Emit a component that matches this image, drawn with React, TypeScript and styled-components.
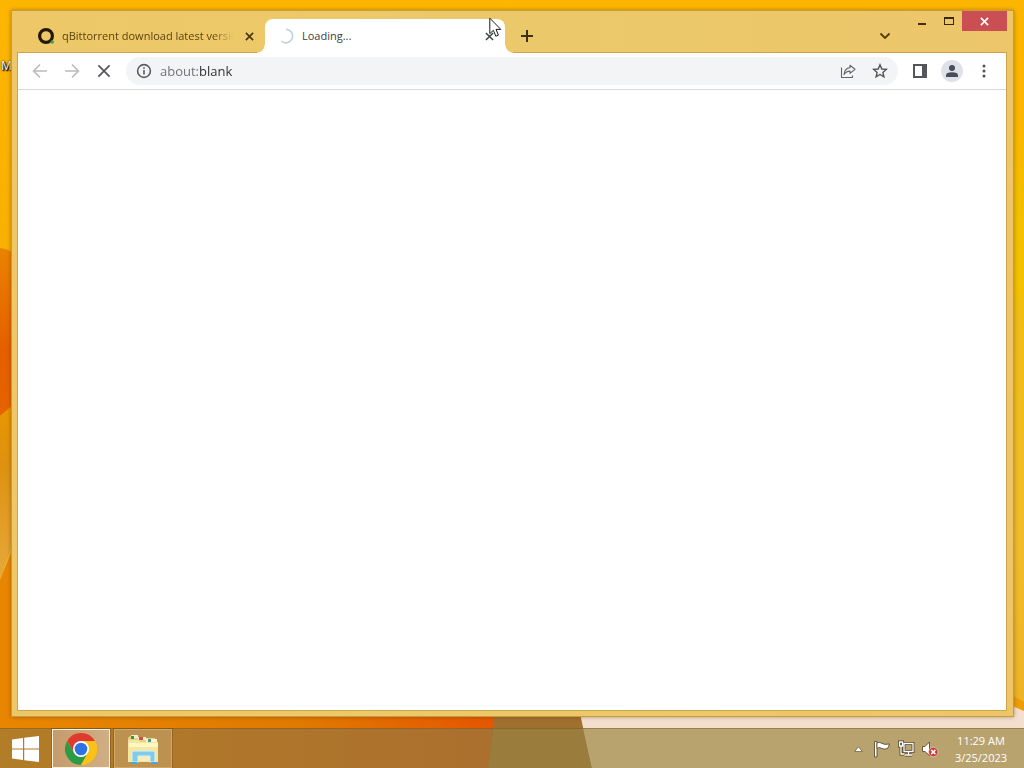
import React from 'react';
import styled, { createGlobalStyle } from 'styled-components';

const GlobalStyle = createGlobalStyle`
  *, *::before, *::after { box-sizing: border-box; }
  html, body { margin: 0; height: 100%; overflow: hidden; }
  body { font-family: "Open Sans", "Noto Sans", sans-serif; font-size: 12px; color: #3c4043; }
  button, input { font: inherit; color: inherit; border: 0; padding: 0; margin: 0; background: none; }
  svg { display: block; flex: none; }
`;

const Desktop = styled.div`
  position: relative;
  isolation: isolate;
  display: flex;
  flex-direction: column;
  height: 100vh;
  overflow: hidden;
`;

const WallpaperArt = styled.svg`
  position: absolute;
  inset: 0;
  z-index: -2;
  width: 100%;
  height: 100%;
`;

const ShortcutLabel = styled.span`
  position: absolute;
  z-index: -1;
  left: 1px;
  top: 58px;
  line-height: 16px;
  color: #fff;
  text-shadow: 1px 1px 1px #000, 0 0 2px #000, 1px 1px 2px #000;
`;

const BrowserWindow = styled.main`
  flex: 1;
  display: flex;
  flex-direction: column;
  min-height: 0;
  margin: 10px 10px 11px 11px;
  padding: 0 7px 6px 6px;
  border: 1px solid #c89b40;
  background: linear-gradient(90deg, #eec868, #ebc96a 50%, #edc66a);
  box-shadow: 0 0 4px rgba(90, 50, 0, 0.45);
`;

const TabStrip = styled.header`
  display: flex;
  align-items: flex-end;
  height: 42px;
  padding-left: 7px;
`;

const Tab = styled.div<{ $active?: boolean }>`
  position: relative;
  display: flex;
  align-items: center;
  flex: 0 1 240px;
  min-width: 0;
  height: 34px;
  padding: 0 8px 0 13px;
  gap: 8px;
  border-radius: 8px 8px 0 0;
  background: ${p => (p.$active ? '#fff' : 'transparent')};

  &::before, &::after {
    content: ${p => (p.$active ? '""' : 'none')};
    position: absolute;
    bottom: 0;
    width: 8px;
    height: 8px;
  }
  &::before { right: 100%; background: radial-gradient(circle at 0 0, transparent 7px, #fff 8px); }
  &::after { left: 100%; background: radial-gradient(circle at 100% 0, transparent 7px, #fff 8px); }
`;

const TabTitle = styled.span<{ $faded?: boolean }>`
  flex: 1;
  min-width: 0;
  overflow: hidden;
  white-space: nowrap;
  font-size: 11px;
  line-height: 16px;
  color: ${p => (p.$faded ? '#5a4310' : '#3c4043')};
  mask-image: ${p => (p.$faded ? 'linear-gradient(90deg, #000 88%, transparent)' : 'none')};
`;

const IconButton = styled.button<{ $size: number; $round?: boolean }>`
  display: flex;
  flex: none;
  align-items: center;
  justify-content: center;
  width: ${p => p.$size}px;
  height: ${p => p.$size}px;
  border-radius: 50%;
  background: ${p => (p.$round ? '#dfe1e8' : 'transparent')};
`;

const NewTabSlot = styled.div`
  flex: 1;
  padding: 0 0 3px 8px;
`;

const TabSearchSlot = styled.div`
  padding: 0 9px 3px 0;
`;

const WindowControls = styled.div`
  display: flex;
  align-self: flex-start;
  margin-right: -1px;
`;

const ControlButton = styled.button<{ $close?: boolean }>`
  display: flex;
  align-items: center;
  justify-content: center;
  width: ${p => (p.$close ? 45 : 27)}px;
  height: 20px;
  background: ${p => (p.$close ? '#c94f55' : 'transparent')};
`;

const Page = styled.section`
  flex: 1;
  display: flex;
  flex-direction: column;
  min-height: 0;
  background: #fff;
  outline: 1px solid rgba(170, 130, 40, 0.5);
`;

const Toolbar = styled.nav`
  display: flex;
  align-items: center;
  height: 37px;
  padding: 0 8px;
  gap: 4px;
  border-bottom: 1px solid #d9dadc;
  background: #fff;
`;

const AddressBar = styled.label`
  display: flex;
  align-items: center;
  flex: 1;
  min-width: 0;
  height: 28px;
  margin: 0 4px;
  padding: 0 2px 0 10px;
  border-radius: 14px;
  background: #f2f4f6;
`;

const AddressField = styled.div`
  flex: 1;
  min-width: 0;
  margin-left: 8px;
  font-size: 13px;
  line-height: 20px;
`;

const AddressInput = styled.input`
  && {
    display: block;
    width: 100%;
    line-height: 20px;
    color: transparent;
    caret-color: #202124;
    outline: none;
    background: linear-gradient(90deg, #6a6e73 40px, #2a2c30 40px);
    background-clip: text;
  }
`;

const Viewport = styled.div`
  flex: 1;
`;

const Taskbar = styled.footer`
  display: flex;
  flex: none;
  align-items: stretch;
  height: 40px;
  border-top: 1px solid rgba(110, 85, 40, 0.45);
  background: rgba(139, 112, 67, 0.6);
`;

const StartButton = styled.button`
  display: flex;
  align-items: center;
  justify-content: center;
  width: 50px;
`;

const TaskButton = styled.button<{ $active?: boolean }>`
  display: flex;
  align-items: center;
  justify-content: center;
  width: 58px;
  margin: 0 2px;
  && {
    border: 1px solid ${p => (p.$active ? '#fff3df' : '#d3a768')};
    background: ${p => (p.$active ? 'linear-gradient(90deg, #c59b6c, #d0ae84)' : '#bd914f')};
  }
  outline: 1px solid rgba(100, 65, 20, 0.35);
`;

const Tray = styled.div`
  display: flex;
  align-items: center;
  margin-left: auto;
  padding-right: 10px;
  gap: 4px;
`;

const Clock = styled.time`
  width: 66px;
  margin-left: 4px;
  padding-top: 1px;
  text-align: center;
  white-space: nowrap;
  font-size: 11px;
  line-height: 17px;
  color: #fff;
`;

const Pointer = styled.svg`
  position: absolute;
  left: 489px;
  top: 17px;
  pointer-events: none;
`;

const Wallpaper = () => (
  <WallpaperArt viewBox="0 0 1024 768" preserveAspectRatio="none" aria-hidden="true">
    <defs>
      <linearGradient id="right" x1="0" y1="0" x2="0" y2="1">
        <stop offset="0" stopColor="#fdb600" />
        <stop offset=".15" stopColor="#fbb600" />
        <stop offset=".27" stopColor="#f2c000" />
        <stop offset=".37" stopColor="#f3c200" />
        <stop offset=".42" stopColor="#f0bd18" />
        <stop offset=".7" stopColor="#f0bd2a" />
        <stop offset="1" stopColor="#ecaf28" />
      </linearGradient>
      <linearGradient id="left" x1="0" y1="0" x2="0" y2="1">
        <stop offset="0" stopColor="#fdb600" />
        <stop offset="1" stopColor="#f9b000" />
      </linearGradient>
      <linearGradient id="red" x1="0" y1="0" x2="0" y2="1">
        <stop offset="0" stopColor="#ea8300" />
        <stop offset=".6" stopColor="#e55f00" />
        <stop offset="1" stopColor="#e66300" />
      </linearGradient>
      <linearGradient id="amber" x1="0" y1="0" x2="0" y2="1">
        <stop offset="0" stopColor="#e99700" />
        <stop offset=".35" stopColor="#dd9210" />
        <stop offset="1" stopColor="#e6a83d" />
      </linearGradient>
      <linearGradient id="floor" x1="0" y1="0" x2="1" y2="0">
        <stop offset="0" stopColor="#e98600" />
        <stop offset=".6" stopColor="#e07900" />
        <stop offset="1" stopColor="#e65500" />
      </linearGradient>
      <linearGradient id="floorShade" x1="0" y1="0" x2="1" y2="0">
        <stop offset="0" stopColor="#ed9000" />
        <stop offset="1" stopColor="#dd7010" />
      </linearGradient>
    </defs>
    <rect width="1024" height="768" fill="url(#right)" />
    <rect width="14" height="250" fill="url(#left)" />
    <path d="M0 248Q8 249 14 253V406L0 416Z" fill="url(#red)" />
    <path d="M0 416L14 404V540L0 580Z" fill="url(#amber)" />
    <path d="M0 580L14 545V700H500V768H0Z" fill="url(#floor)" />
    <path d="M0 728H492V768H0Z" fill="url(#floorShade)" />
    <path d="M496 700H580L592 768H488Z" fill="#a0702f" />
    <path d="M493 728H583L592 768H488Z" fill="#b18e32" />
    <path d="M577 700H1008L1024 709V768H592Z" fill="#f4dfcf" />
    <path d="M583 728H1024V768H592Z" fill="#fcf0b2" />
    <path d="M1010 694L1024 702V711L1008 704Z" fill="#ef9c08" />
  </WallpaperArt>
);

const Cross = ({ size, color, width = 2 }: { size: number; color: string; width?: number }) => (
  <svg width={size} height={size} viewBox="0 0 10 10" stroke={color} strokeWidth={width} fill="none">
    <path d="M1 1L9 9M9 1L1 9" />
  </svg>
);

const ChromeLogo = () => (
  <svg width="32" height="32" viewBox="0 0 32 32">
    <circle cx="16" cy="16" r="16" fill="#fbc116" />
    <path d="M2.14 8A16 16 0 0 1 29.86 8H16L9.07 20Z" fill="#df3a2f" />
    <path d="M2.14 8A16 16 0 0 0 16 32L22.93 20L16 24L9.07 20Z" fill="#2d9a48" />
    <path d="M29.86 8H16L22.93 20L16 32A16 16 0 0 0 29.86 8Z" fill="#fbc116" />
    <circle cx="16" cy="16" r="8" fill="#fff" />
    <circle cx="16" cy="16" r="6.3" fill="#2f73e2" />
  </svg>
);

const ExplorerLogo = () => (
  <svg width="32" height="32" viewBox="0 0 32 32">
    <path d="M1 5L3 3H9L11 5H28V28H1Z" fill="#ead27e" />
    <path d="M4 2H11V5H4Z" fill="#e8efd2" /><path d="M4 3H7V6H4Z" fill="#2c9850" />
    <path d="M11 4H19V7H11Z" fill="#f4ead0" /><path d="M12 4H16V7H12Z" fill="#cb5146" />
    <path d="M19 6H30V9H19Z" fill="#fff6d0" /><path d="M21 6H24V9H21Z" fill="#3c9c8b" />
    <path d="M1 7H11L13 9H31V29H1Z" fill="#f5e79f" />
    <path d="M2 10H31V14H2Z" fill="#fff6c4" />
    <path d="M5 20Q5 18 7 18H26Q28 18 28 20V29H23V23H11V29H5Z" fill="#82caea" stroke="#d5f2fa" />
    <path d="M4 29H10V31H4ZM24 29H30V31H24Z" fill="#4aa5d8" />
    <path d="M11.5 23.5H22.5V28H11.5Z" fill="#f5edbb" />
  </svg>
);

export default function App() {
  return (
    <Desktop>
      <GlobalStyle />
      <Wallpaper />
      <ShortcutLabel>M</ShortcutLabel>
      <BrowserWindow>
        <TabStrip>
          <Tab>
            <svg width="16" height="16" viewBox="0 0 16 16">
              <circle cx="8" cy="8" r="6.4" fill="none" stroke="#24180b" strokeWidth="3.2" />
              <circle cx="14.2" cy="14" r="1.8" fill="#43a047" />
            </svg>
            <TabTitle $faded>qBittorrent download latest version</TabTitle>
            <IconButton $size={16} aria-label="Close tab"><Cross size={9} color="#4a350d" width={1.8} /></IconButton>
          </Tab>
          <Tab $active>
            <svg width="16" height="16" viewBox="0 0 16 16" fill="none" stroke="#c0d2dc" strokeWidth="1.6">
              <path d="M8 1.2A6.8 6.8 0 1 1 3.2 13" />
            </svg>
            <TabTitle>Loading...</TabTitle>
            <IconButton $size={16} aria-label="Close tab"><Cross size={9} color="#3c4043" width={1.6} /></IconButton>
          </Tab>
          <NewTabSlot>
            <IconButton $size={28} aria-label="New tab">
              <svg width="14" height="14" viewBox="0 0 14 14" stroke="#3e2e12" strokeWidth="2"><path d="M1 7H13M7 1V13" /></svg>
            </IconButton>
          </NewTabSlot>
          <TabSearchSlot>
            <IconButton $size={28} aria-label="Search tabs">
              <svg width="12" height="8" viewBox="0 0 12 8" fill="none" stroke="#553b0c" strokeWidth="1.8"><path d="M1.5 1.5L6 6L10.5 1.5" /></svg>
            </IconButton>
          </TabSearchSlot>
          <WindowControls>
            <ControlButton aria-label="Minimize">
              <svg width="10" height="10" viewBox="0 0 10 10"><path d="M1 7H9V9H1Z" fill="#4a2a08" /></svg>
            </ControlButton>
            <ControlButton aria-label="Maximize">
              <svg width="10" height="8" viewBox="0 0 10 8"><path fillRule="evenodd" d="M0 0H10V8H0ZM1 2V7H9V2Z" fill="#3a2608" /></svg>
            </ControlButton>
            <ControlButton $close aria-label="Close"><Cross size={9} color="#fff" width={1.8} /></ControlButton>
          </WindowControls>
        </TabStrip>
        <Page>
          <Toolbar>
            <IconButton $size={28} aria-label="Back">
              <svg width="16" height="16" viewBox="0 0 16 16" fill="none" stroke="#b9bbbe" strokeWidth="1.6"><path d="M15 8H2M8 1.5L1.5 8L8 14.5" /></svg>
            </IconButton>
            <IconButton $size={28} aria-label="Forward">
              <svg width="16" height="16" viewBox="0 0 16 16" fill="none" stroke="#b9bbbe" strokeWidth="1.6"><path d="M1 8H14M8 1.5L14.5 8L8 14.5" /></svg>
            </IconButton>
            <IconButton $size={28} aria-label="Stop"><Cross size={14} color="#505357" width={1.2} /></IconButton>
            <AddressBar>
              <svg width="16" height="16" viewBox="0 0 16 16" fill="none" stroke="#5a5e63" strokeWidth="1.6">
                <circle cx="8" cy="8" r="6.4" /><path d="M8 7V11.6M8 4.2V5.8" />
              </svg>
              <AddressField>
                <AddressInput defaultValue="about:blank" aria-label="Address" spellCheck={false} />
              </AddressField>
              <IconButton $size={32} aria-label="Share">
                <svg width="16" height="16" viewBox="0 0 16 16" fill="none" stroke="#62666b" strokeWidth="1.1" strokeLinejoin="round">
                  <path d="M1.5 4.5V14.5H12.5V12.5" /><path d="M10 2.2L15 6.3L10 10.4V8.1Q6.2 8.1 4 11.5Q4.6 5.2 10 4.6Z" />
                </svg>
              </IconButton>
              <IconButton $size={32} aria-label="Bookmark">
                <svg width="16" height="16" viewBox="0 0 16 16" fill="none" stroke="#505459" strokeWidth="1.4">
                  <path d="M8 1.8L9.8 6L14.3 6.4L10.9 9.4L11.9 13.8L8 11.5L4.1 13.8L5.1 9.4L1.7 6.4L6.2 6Z" />
                </svg>
              </IconButton>
            </AddressBar>
            <IconButton $size={28} aria-label="Side panel">
              <svg width="14" height="14" viewBox="0 0 14 14"><path fillRule="evenodd" d="M0 0H14V14H0ZM2 2V12H9V2Z" fill="#53565b" /></svg>
            </IconButton>
            <IconButton $size={28} aria-label="Profile">
              <IconButton as="span" $size={22} $round>
                <svg width="12" height="12" viewBox="0 0 12 12" fill="#474c5b"><circle cx="6" cy="3" r="3" /><path d="M0 12V10.4Q0 7.3 6 7.3T12 10.4V12Z" /></svg>
              </IconButton>
            </IconButton>
            <IconButton $size={28} aria-label="Menu">
              <svg width="4" height="14" viewBox="0 0 4 14" fill="#505357"><circle cx="2" cy="2" r="1.5" /><circle cx="2" cy="7" r="1.5" /><circle cx="2" cy="12" r="1.5" /></svg>
            </IconButton>
          </Toolbar>
          <Viewport />
        </Page>
      </BrowserWindow>
      <Taskbar>
        <StartButton aria-label="Start">
          <svg width="27" height="26" viewBox="0 0 27 26" fill="#fff"><path d="M0 3.6L11 2V12.4H0ZM12.2 1.8L27 0V12.4H12.2ZM0 13.6H11V24L0 22.4ZM12.2 13.6H27V26L12.2 24.2Z" /></svg>
        </StartButton>
        <TaskButton $active aria-label="Google Chrome"><ChromeLogo /></TaskButton>
        <TaskButton aria-label="File Explorer"><ExplorerLogo /></TaskButton>
        <Tray>
          <IconButton $size={20} aria-label="Show hidden icons">
            <svg width="9" height="6" viewBox="0 0 9 6"><path d="M.7 5.5L4.5 .8L8.3 5.5Z" fill="#fff" stroke="#6c5632" strokeWidth=".7" /></svg>
          </IconButton>
          <IconButton $size={20} aria-label="Action Center">
            <svg width="18" height="18" viewBox="0 0 18 18" fill="#fff" stroke="#4e3d25" strokeWidth=".8">
              <path d="M1.5 1.5H4V17H1.5Z" /><path d="M4 2.8Q7 1.8 9 3.4T16.6 4L14.5 8.5Q11 9.8 8.6 8.3T4 8.4Z" />
            </svg>
          </IconButton>
          <IconButton $size={20} aria-label="Network">
            <svg width="18" height="18" viewBox="0 0 18 18" fill="none">
              <path d="M7 3.5H16V11.5H7ZM11.5 12V15M8 15H15M4 6V14H7M2.5 2H5.5V6H2.5Z" stroke="#4e3d25" strokeWidth="2.8" />
              <path d="M7 3.5H16V11.5H7ZM11.5 12V15M8 15H15M4 6V14H7M2.5 2H5.5V6H2.5Z" stroke="#fff" strokeWidth="1.3" />
            </svg>
          </IconButton>
          <IconButton $size={20} aria-label="Volume muted">
            <svg width="18" height="18" viewBox="0 0 18 18">
              <path d="M1.5 6.5H4L8.5 2V15.5L4 11.5H1.5Z" fill="#fff" stroke="#4e3d25" strokeWidth=".8" />
              <circle cx="12.3" cy="12" r="4.7" fill="#c93835" stroke="#f3d0c0" strokeWidth=".7" />
              <path d="M10.2 9.9L14.4 14.1M14.4 9.9L10.2 14.1" stroke="#fff" strokeWidth="1.5" />
            </svg>
          </IconButton>
          <Clock>11:29 AM<br />3/25/2023</Clock>
        </Tray>
      </Taskbar>
      <Pointer width="13" height="21" viewBox="0 0 13 21" aria-hidden="true">
        <path d="M.8 1.2V16.6L4.4 13.3L6.8 19.2L9.4 18.1L7 12.4H11.8Z" fill="#fff" stroke="#1b1b1b" strokeWidth="1" />
      </Pointer>
    </Desktop>
  );
}
